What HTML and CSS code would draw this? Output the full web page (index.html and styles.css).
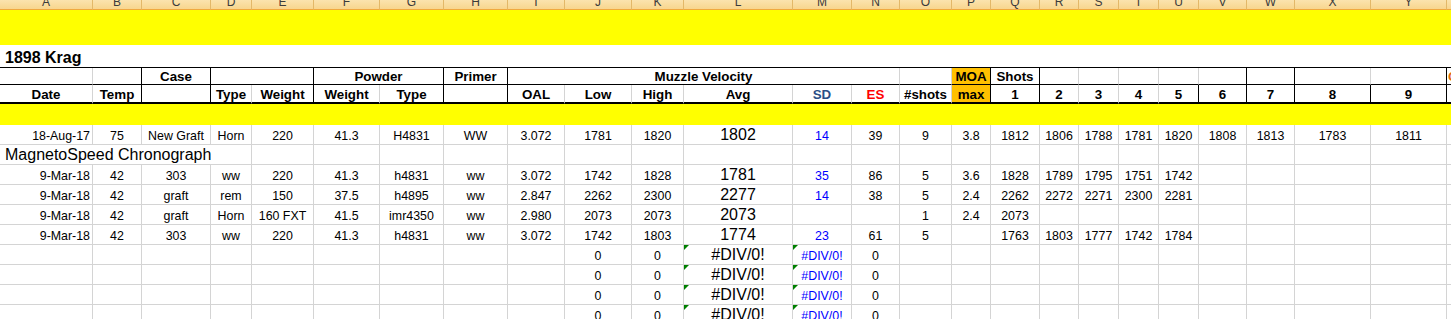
FILE: index.html
```html
<!DOCTYPE html>
<html lang="en">
<head>
<meta charset="utf-8">
<title>1898 Krag</title>
<link rel="stylesheet" href="styles.css">
</head>
<body>
<div class="sheet">
  <div class="row letters">
    <div class="cell a">A</div><div class="cell b">B</div><div class="cell c">C</div><div class="cell d">D</div><div class="cell e">E</div><div class="cell f">F</div><div class="cell g">G</div><div class="cell h">H</div><div class="cell i">I</div><div class="cell j">J</div><div class="cell k">K</div><div class="cell l">L</div><div class="cell m">M</div><div class="cell n">N</div><div class="cell o">O</div><div class="cell p">P</div><div class="cell q">Q</div><div class="cell r">R</div><div class="cell s">S</div><div class="cell t">T</div><div class="cell u">U</div><div class="cell v">V</div><div class="cell w">W</div><div class="cell x">X</div><div class="cell y">Y</div><div class="cell z">Z</div>
  </div>
  <div class="row band band-top"></div>
  <div class="row title"><div class="title-cell">1898 Krag</div></div>
  <div class="row head1">
    <div class="cell a"></div>
    <div class="cell b bk"></div>
    <div class="cell c bk">Case</div>
    <div class="cell de bk"></div>
    <div class="cell fg bk">Powder</div>
    <div class="cell h bk">Primer</div>
    <div class="cell in">Muzzle Velocity</div>
    <div class="cell o"></div>
    <div class="cell p moa bk">MOA</div>
    <div class="cell q bk">Shots</div>
    <div class="cell r"></div>
    <div class="cell s"></div>
    <div class="cell t"></div>
    <div class="cell u"></div>
    <div class="cell v bk"></div>
    <div class="cell w bk"></div>
    <div class="cell x"></div>
    <div class="cell y bk"></div>
    <div class="cell z left overflow-note">C</div>
  </div>
  <div class="row head2">
    <div class="cell a">Date</div>
    <div class="cell b bk">Temp</div>
    <div class="cell c bk"></div>
    <div class="cell d">Type</div>
    <div class="cell e bk">Weight</div>
    <div class="cell f">Weight</div>
    <div class="cell g bk">Type</div>
    <div class="cell h bk"></div>
    <div class="cell i">OAL</div>
    <div class="cell j">Low</div>
    <div class="cell k">High</div>
    <div class="cell l avg">Avg</div>
    <div class="cell m sd">SD</div>
    <div class="cell n es">ES</div>
    <div class="cell o">#shots</div>
    <div class="cell p moa bk">max</div>
    <div class="cell q bk">1</div>
    <div class="cell r">2</div>
    <div class="cell s">3</div>
    <div class="cell t">4</div>
    <div class="cell u bk">5</div>
    <div class="cell v bk">6</div>
    <div class="cell w bk">7</div>
    <div class="cell x bk">8</div>
    <div class="cell y bk">9</div>
    <div class="cell z bk"></div>
  </div>
  <div class="row band band-mid"></div>

  <div class="row data">
    <div class="cell a right">18-Aug-17</div><div class="cell b">75</div><div class="cell c">New Graft</div><div class="cell d">Horn</div><div class="cell e">220</div><div class="cell f">41.3</div><div class="cell g">H4831</div><div class="cell h">WW</div><div class="cell i">3.072</div><div class="cell j">1781</div><div class="cell k">1820</div><div class="cell l big">1802</div><div class="cell m blue">14</div><div class="cell n">39</div><div class="cell o">9</div><div class="cell p">3.8</div><div class="cell q">1812</div><div class="cell r">1806</div><div class="cell s">1788</div><div class="cell t">1781</div><div class="cell u">1820</div><div class="cell v">1808</div><div class="cell w">1813</div><div class="cell x">1783</div><div class="cell y">1811</div><div class="cell z"></div>
  </div>
  <div class="row data">
    <div class="cell ad left big section">MagnetoSpeed Chronograph</div><div class="cell e"></div><div class="cell f"></div><div class="cell g"></div><div class="cell h"></div><div class="cell i"></div><div class="cell j"></div><div class="cell k"></div><div class="cell l"></div><div class="cell m"></div><div class="cell n"></div><div class="cell o"></div><div class="cell p"></div><div class="cell q"></div><div class="cell r"></div><div class="cell s"></div><div class="cell t"></div><div class="cell u"></div><div class="cell v"></div><div class="cell w"></div><div class="cell x"></div><div class="cell y"></div><div class="cell z"></div>
  </div>
  <div class="row data">
    <div class="cell a right">9-Mar-18</div><div class="cell b">42</div><div class="cell c">303</div><div class="cell d">ww</div><div class="cell e">220</div><div class="cell f">41.3</div><div class="cell g">h4831</div><div class="cell h">ww</div><div class="cell i">3.072</div><div class="cell j">1742</div><div class="cell k">1828</div><div class="cell l big">1781</div><div class="cell m blue">35</div><div class="cell n">86</div><div class="cell o">5</div><div class="cell p">3.6</div><div class="cell q">1828</div><div class="cell r">1789</div><div class="cell s">1795</div><div class="cell t">1751</div><div class="cell u">1742</div><div class="cell v"></div><div class="cell w"></div><div class="cell x"></div><div class="cell y"></div><div class="cell z"></div>
  </div>
  <div class="row data">
    <div class="cell a right">9-Mar-18</div><div class="cell b">42</div><div class="cell c">graft</div><div class="cell d">rem</div><div class="cell e">150</div><div class="cell f">37.5</div><div class="cell g">h4895</div><div class="cell h">ww</div><div class="cell i">2.847</div><div class="cell j">2262</div><div class="cell k">2300</div><div class="cell l big">2277</div><div class="cell m blue">14</div><div class="cell n">38</div><div class="cell o">5</div><div class="cell p">2.4</div><div class="cell q">2262</div><div class="cell r">2272</div><div class="cell s">2271</div><div class="cell t">2300</div><div class="cell u">2281</div><div class="cell v"></div><div class="cell w"></div><div class="cell x"></div><div class="cell y"></div><div class="cell z"></div>
  </div>
  <div class="row data">
    <div class="cell a right">9-Mar-18</div><div class="cell b">42</div><div class="cell c">graft</div><div class="cell d">Horn</div><div class="cell e">160 FXT</div><div class="cell f">41.5</div><div class="cell g">imr4350</div><div class="cell h">ww</div><div class="cell i">2.980</div><div class="cell j">2073</div><div class="cell k">2073</div><div class="cell l big">2073</div><div class="cell m blue"></div><div class="cell n"></div><div class="cell o">1</div><div class="cell p">2.4</div><div class="cell q">2073</div><div class="cell r"></div><div class="cell s"></div><div class="cell t"></div><div class="cell u"></div><div class="cell v"></div><div class="cell w"></div><div class="cell x"></div><div class="cell y"></div><div class="cell z"></div>
  </div>
  <div class="row data">
    <div class="cell a right">9-Mar-18</div><div class="cell b">42</div><div class="cell c">303</div><div class="cell d">ww</div><div class="cell e">220</div><div class="cell f">41.3</div><div class="cell g">h4831</div><div class="cell h">ww</div><div class="cell i">3.072</div><div class="cell j">1742</div><div class="cell k">1803</div><div class="cell l big">1774</div><div class="cell m blue">23</div><div class="cell n">61</div><div class="cell o">5</div><div class="cell p"></div><div class="cell q">1763</div><div class="cell r">1803</div><div class="cell s">1777</div><div class="cell t">1742</div><div class="cell u">1784</div><div class="cell v"></div><div class="cell w"></div><div class="cell x"></div><div class="cell y"></div><div class="cell z"></div>
  </div>
  <div class="row data">
    <div class="cell a"></div><div class="cell b"></div><div class="cell c"></div><div class="cell d"></div><div class="cell e"></div><div class="cell f"></div><div class="cell g"></div><div class="cell h"></div><div class="cell i"></div><div class="cell j">0</div><div class="cell k">0</div><div class="cell l big err">#DIV/0!</div><div class="cell m blue err">#DIV/0!</div><div class="cell n">0</div><div class="cell o"></div><div class="cell p"></div><div class="cell q"></div><div class="cell r"></div><div class="cell s"></div><div class="cell t"></div><div class="cell u"></div><div class="cell v"></div><div class="cell w"></div><div class="cell x"></div><div class="cell y"></div><div class="cell z"></div>
  </div>
  <div class="row data">
    <div class="cell a"></div><div class="cell b"></div><div class="cell c"></div><div class="cell d"></div><div class="cell e"></div><div class="cell f"></div><div class="cell g"></div><div class="cell h"></div><div class="cell i"></div><div class="cell j">0</div><div class="cell k">0</div><div class="cell l big err">#DIV/0!</div><div class="cell m blue err">#DIV/0!</div><div class="cell n">0</div><div class="cell o"></div><div class="cell p"></div><div class="cell q"></div><div class="cell r"></div><div class="cell s"></div><div class="cell t"></div><div class="cell u"></div><div class="cell v"></div><div class="cell w"></div><div class="cell x"></div><div class="cell y"></div><div class="cell z"></div>
  </div>
  <div class="row data">
    <div class="cell a"></div><div class="cell b"></div><div class="cell c"></div><div class="cell d"></div><div class="cell e"></div><div class="cell f"></div><div class="cell g"></div><div class="cell h"></div><div class="cell i"></div><div class="cell j">0</div><div class="cell k">0</div><div class="cell l big err">#DIV/0!</div><div class="cell m blue err">#DIV/0!</div><div class="cell n">0</div><div class="cell o"></div><div class="cell p"></div><div class="cell q"></div><div class="cell r"></div><div class="cell s"></div><div class="cell t"></div><div class="cell u"></div><div class="cell v"></div><div class="cell w"></div><div class="cell x"></div><div class="cell y"></div><div class="cell z"></div>
  </div>
  <div class="row data">
    <div class="cell a"></div><div class="cell b"></div><div class="cell c"></div><div class="cell d"></div><div class="cell e"></div><div class="cell f"></div><div class="cell g"></div><div class="cell h"></div><div class="cell i"></div><div class="cell j">0</div><div class="cell k">0</div><div class="cell l big err">#DIV/0!</div><div class="cell m blue err">#DIV/0!</div><div class="cell n">0</div><div class="cell o"></div><div class="cell p"></div><div class="cell q"></div><div class="cell r"></div><div class="cell s"></div><div class="cell t"></div><div class="cell u"></div><div class="cell v"></div><div class="cell w"></div><div class="cell x"></div><div class="cell y"></div><div class="cell z"></div>
  </div>
</div>
</body>
</html>
```

FILE: styles.css
```css
html, body {
  margin: 0;
  padding: 0;
  overflow: hidden;
  background: #ffffff;
}

body {
  font-family: "Liberation Sans", Arial, sans-serif;
  color: #000000;
}

.sheet {
  width: 1467px;
  display: flex;
  flex-direction: column;
}

.row {
  display: flex;
  flex: none;
}

.cell {
  box-sizing: border-box;
  flex: none;
  display: flex;
  align-items: flex-end;
  justify-content: center;
  white-space: nowrap;
  overflow: hidden;
  border-right: 1px solid #d4d4d4;
  border-bottom: 1px solid #d4d4d4;
  font-size: 12.4px;
  line-height: 15px;
}

/* column widths (each includes its right gridline) */
.a { width: 93px; }
.b { width: 49px; }
.c { width: 69px; }
.d { width: 41px; }
.e { width: 62px; }
.f { width: 66px; }
.g { width: 64px; }
.h { width: 64px; }
.i { width: 57px; }
.j { width: 67px; }
.k { width: 52px; }
.l { width: 109px; }
.m { width: 59px; }
.n { width: 48px; }
.o { width: 52px; }
.p { width: 39px; }
.q { width: 49px; }
.r { width: 39px; }
.s { width: 40px; }
.t { width: 40px; }
.u { width: 40px; }
.v { width: 48px; }
.w { width: 48px; }
.x { width: 76px; }
.y { width: 76px; }
.z { width: 20px; }

/* merged ranges */
.de { width: 103px; }
.fg { width: 130px; }
.in { width: 392px; }
.ad { width: 252px; }

.right { justify-content: flex-end; padding-right: 2px; }
.left { justify-content: flex-start; padding-left: 2px; }

/* column letter header strip */
.letters { height: 10px; }
.letters .cell {
  background: linear-gradient(#fbe3ae, #f8d68e);
  border-right: 1px solid #e3b868;
  border-bottom: 1px solid #f0a940;
  color: #3b3b3b;
  font-size: 12px;
  line-height: 14px;
}

/* yellow bands */
.band { background: #ffff00; width: 1467px; }
.band-top { height: 35px; }
.band-mid { height: 21px; }

/* title */
.title { height: 23px; }
.title-cell {
  box-sizing: border-box;
  width: 1467px;
  height: 23px;
  display: flex;
  align-items: flex-end;
  padding-left: 5px;
  border-bottom: 1px solid #000000;
  font-weight: bold;
  font-size: 16px;
  line-height: 18px;
}

/* header rows */
.head1 { height: 17px; }
.head2 { height: 19px; }
.head1 .cell,
.head2 .cell {
  font-weight: bold;
  font-size: 13.33px;
  line-height: 15px;
}
.head1 .cell { border-bottom: 1px solid #000000; }
.head2 .cell { border-bottom: 2px solid #000000; }
.cell.bk { border-right-color: #000000; }
.moa { background: #ffc000; }
.avg { font-size: 14px; }
.sd { color: #2b4f86; }
.es { color: #ff0000; }
.overflow-note { color: #e46c0a; padding-left: 1px; }

/* data rows */
.data { height: 20px; }
.big { font-size: 16px; line-height: 18px; }
.section { padding-left: 5px; }
.blue { color: #0000ff; }

.err { position: relative; }
.err::before {
  content: "";
  position: absolute;
  left: 0;
  top: 0;
  border-top: 5px solid #008000;
  border-right: 5px solid transparent;
}
```
